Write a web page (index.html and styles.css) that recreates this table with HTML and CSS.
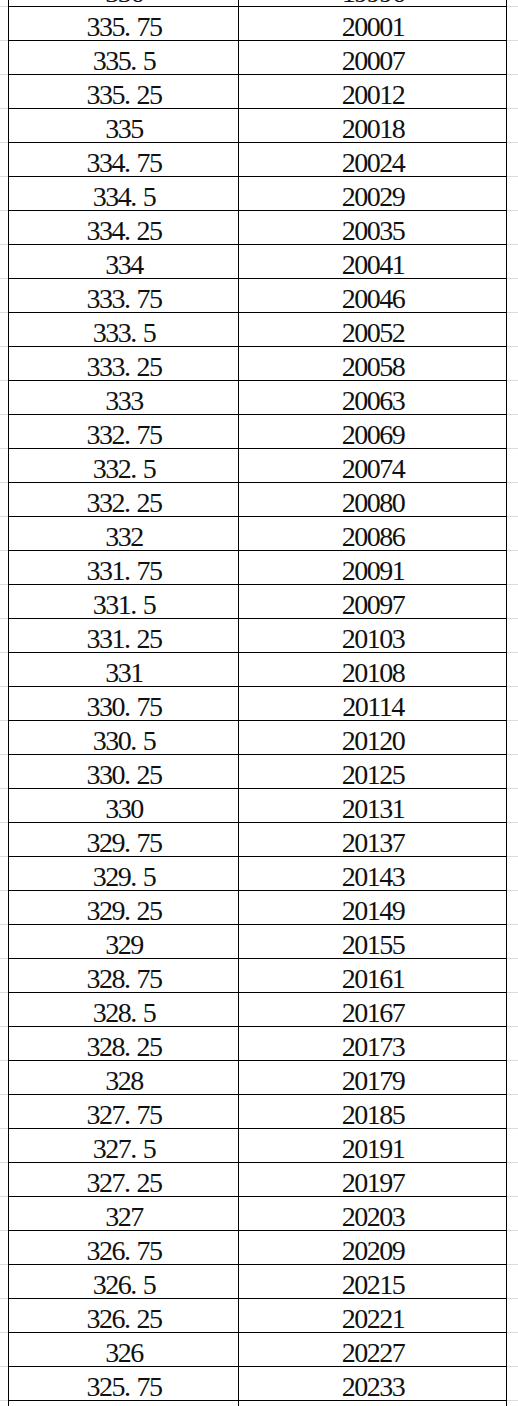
FILE: index.html
```html
<!DOCTYPE html>
<html lang="zh">
<head>
<meta charset="utf-8">
<title>Sheet</title>
<link rel="stylesheet" href="styles.css">
</head>
<body>
<div class="sheet">
  <div class="c a">336</div><div class="c b">19996</div>
  <div class="c a">335<span class="p">.</span>75</div><div class="c b">20001</div>
  <div class="c a">335<span class="p">.</span>5</div><div class="c b">20007</div>
  <div class="c a">335<span class="p">.</span>25</div><div class="c b">20012</div>
  <div class="c a">335</div><div class="c b">20018</div>
  <div class="c a">334<span class="p">.</span>75</div><div class="c b">20024</div>
  <div class="c a">334<span class="p">.</span>5</div><div class="c b">20029</div>
  <div class="c a">334<span class="p">.</span>25</div><div class="c b">20035</div>
  <div class="c a">334</div><div class="c b">20041</div>
  <div class="c a">333<span class="p">.</span>75</div><div class="c b">20046</div>
  <div class="c a">333<span class="p">.</span>5</div><div class="c b">20052</div>
  <div class="c a">333<span class="p">.</span>25</div><div class="c b">20058</div>
  <div class="c a">333</div><div class="c b">20063</div>
  <div class="c a">332<span class="p">.</span>75</div><div class="c b">20069</div>
  <div class="c a">332<span class="p">.</span>5</div><div class="c b">20074</div>
  <div class="c a">332<span class="p">.</span>25</div><div class="c b">20080</div>
  <div class="c a">332</div><div class="c b">20086</div>
  <div class="c a">331<span class="p">.</span>75</div><div class="c b">20091</div>
  <div class="c a">331<span class="p">.</span>5</div><div class="c b">20097</div>
  <div class="c a">331<span class="p">.</span>25</div><div class="c b">20103</div>
  <div class="c a">331</div><div class="c b">20108</div>
  <div class="c a">330<span class="p">.</span>75</div><div class="c b">20114</div>
  <div class="c a">330<span class="p">.</span>5</div><div class="c b">20120</div>
  <div class="c a">330<span class="p">.</span>25</div><div class="c b">20125</div>
  <div class="c a">330</div><div class="c b">20131</div>
  <div class="c a">329<span class="p">.</span>75</div><div class="c b">20137</div>
  <div class="c a">329<span class="p">.</span>5</div><div class="c b">20143</div>
  <div class="c a">329<span class="p">.</span>25</div><div class="c b">20149</div>
  <div class="c a">329</div><div class="c b">20155</div>
  <div class="c a">328<span class="p">.</span>75</div><div class="c b">20161</div>
  <div class="c a">328<span class="p">.</span>5</div><div class="c b">20167</div>
  <div class="c a">328<span class="p">.</span>25</div><div class="c b">20173</div>
  <div class="c a">328</div><div class="c b">20179</div>
  <div class="c a">327<span class="p">.</span>75</div><div class="c b">20185</div>
  <div class="c a">327<span class="p">.</span>5</div><div class="c b">20191</div>
  <div class="c a">327<span class="p">.</span>25</div><div class="c b">20197</div>
  <div class="c a">327</div><div class="c b">20203</div>
  <div class="c a">326<span class="p">.</span>75</div><div class="c b">20209</div>
  <div class="c a">326<span class="p">.</span>5</div><div class="c b">20215</div>
  <div class="c a">326<span class="p">.</span>25</div><div class="c b">20221</div>
  <div class="c a">326</div><div class="c b">20227</div>
  <div class="c a">325<span class="p">.</span>75</div><div class="c b">20233</div>
  <div class="c a">325<span class="p">.</span>5</div><div class="c b">20239</div>
</div>
</body>
</html>
```
FILE: styles.css
```css
html {
  background: #ffffff repeating-linear-gradient(to bottom, transparent 0, transparent 6px, #dcdcdc 6px, #dcdcdc 7px, transparent 7px, transparent 34px);
}
body {
  margin: 0;
  display: flow-root;
  min-height: 1406px;
  overflow: hidden;
}
.sheet {
  display: grid;
  grid-template-columns: 231px 268px;
  margin: -27px 0 0 8px;
  width: 499px;
  background: #ffffff;
}
.c {
  height: 26px;
  padding: 7px 0 0 1px;
  line-height: 26px;
  border-bottom: 1px solid #000;
  border-right: 1px solid #000;
  text-align: center;
  font-family: "Liberation Serif", "Times New Roman", serif;
  font-size: 28px;
  letter-spacing: -1.5px;
  color: #111;
  white-space: nowrap;
  overflow: hidden;
}
.a {
  border-left: 1px solid #000;
}
.p {
  margin-right: 7px;
}
```
